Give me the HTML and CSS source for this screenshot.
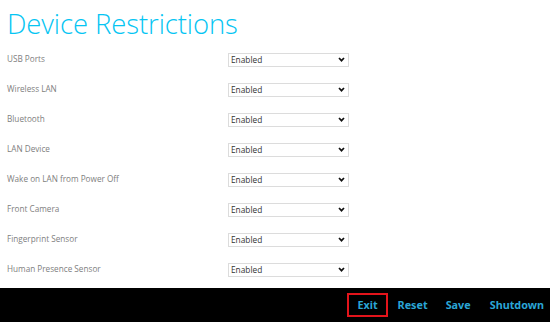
FILE: index.html
```html
<!DOCTYPE html>
<html>
<head>
<meta charset="utf-8">
<link rel="stylesheet" href="styles.css">
</head>
<body>
<div class="page">
  <h1 class="title">Device Restrictions</h1>
  <div class="rows">
    <div class="row"><span class="label">USB Ports</span><div class="select"><span>Enabled</span><svg class="chev" viewBox="0 0 8 6" width="7" height="5"><path d="M1 1.2 L4 4.4 L7 1.2" fill="none" stroke="#111" stroke-width="2"/></svg></div></div>
    <div class="row"><span class="label">Wireless LAN</span><div class="select"><span>Enabled</span><svg class="chev" viewBox="0 0 8 6" width="7" height="5"><path d="M1 1.2 L4 4.4 L7 1.2" fill="none" stroke="#111" stroke-width="2"/></svg></div></div>
    <div class="row"><span class="label">Bluetooth</span><div class="select"><span>Enabled</span><svg class="chev" viewBox="0 0 8 6" width="7" height="5"><path d="M1 1.2 L4 4.4 L7 1.2" fill="none" stroke="#111" stroke-width="2"/></svg></div></div>
    <div class="row"><span class="label">LAN Device</span><div class="select"><span>Enabled</span><svg class="chev" viewBox="0 0 8 6" width="7" height="5"><path d="M1 1.2 L4 4.4 L7 1.2" fill="none" stroke="#111" stroke-width="2"/></svg></div></div>
    <div class="row"><span class="label">Wake on LAN from Power Off</span><div class="select"><span>Enabled</span><svg class="chev" viewBox="0 0 8 6" width="7" height="5"><path d="M1 1.2 L4 4.4 L7 1.2" fill="none" stroke="#111" stroke-width="2"/></svg></div></div>
    <div class="row"><span class="label">Front Camera</span><div class="select"><span>Enabled</span><svg class="chev" viewBox="0 0 8 6" width="7" height="5"><path d="M1 1.2 L4 4.4 L7 1.2" fill="none" stroke="#111" stroke-width="2"/></svg></div></div>
    <div class="row"><span class="label">Fingerprint Sensor</span><div class="select"><span>Enabled</span><svg class="chev" viewBox="0 0 8 6" width="7" height="5"><path d="M1 1.2 L4 4.4 L7 1.2" fill="none" stroke="#111" stroke-width="2"/></svg></div></div>
    <div class="row"><span class="label">Human Presence Sensor</span><div class="select"><span>Enabled</span><svg class="chev" viewBox="0 0 8 6" width="7" height="5"><path d="M1 1.2 L4 4.4 L7 1.2" fill="none" stroke="#111" stroke-width="2"/></svg></div></div>
  </div>
</div>
<div class="bar">
  <span class="btn exit">Exit</span>
  <span class="btn reset">Reset</span>
  <span class="btn">Save</span>
  <span class="btn">Shutdown</span>
</div>
</body>
</html>
```
FILE: styles.css
```css
html, body {
  margin: 0;
  padding: 0;
  background: #fff;
  width: 550px;
  height: 322px;
  overflow: hidden;
}
body {
  font-family: "Open Sans", "Noto Sans", sans-serif;
  display: flex;
  flex-direction: column;
}
.page {
  flex: 1;
  min-height: 0;
  overflow: hidden;
  padding-left: 7px;
}
.title {
  margin: 0;
  padding-top: 7px;
  height: 37px;
  font-weight: 300;
  font-size: 27.5px;
  line-height: 34px;
  color: #05c5f3;
  letter-spacing: -0.1px;
}
.rows {
  display: flex;
  flex-direction: column;
  padding-top: 0;
}
.row {
  display: grid;
  grid-template-columns: 221px 121px;
  align-items: center;
  height: 30px;
}
.label {
  font-size: 8.2px;
  color: #808080;
  line-height: 12px;
  margin-top: 0;
}
.select {
  height: 12px;
  border: 1px solid #dcdcdc;
  display: flex;
  align-items: center;
  justify-content: space-between;
  padding: 0 3px 0 2px;
  font-size: 8.3px;
  color: #333;
  margin-top: 1px;
}
.chev { display: block; }
.bar {
  flex-shrink: 0;
  height: 34px;
  background: #000;
  display: flex;
  align-items: center;
  justify-content: flex-end;
  gap: 19px;
  padding-right: 6px;
}
.btn {
  font-family: "Noto Sans", "Open Sans", sans-serif;
  font-weight: 700;
  font-size: 10.8px;
  line-height: 20px;
  color: #2aa5d6;
}
.btn.reset {
  margin-right: -1px;
}
.btn.exit {
  padding: 0 8px;
  margin: 0 -9px 0 -10px;
  border: 2px solid #e3141b;
}
```
